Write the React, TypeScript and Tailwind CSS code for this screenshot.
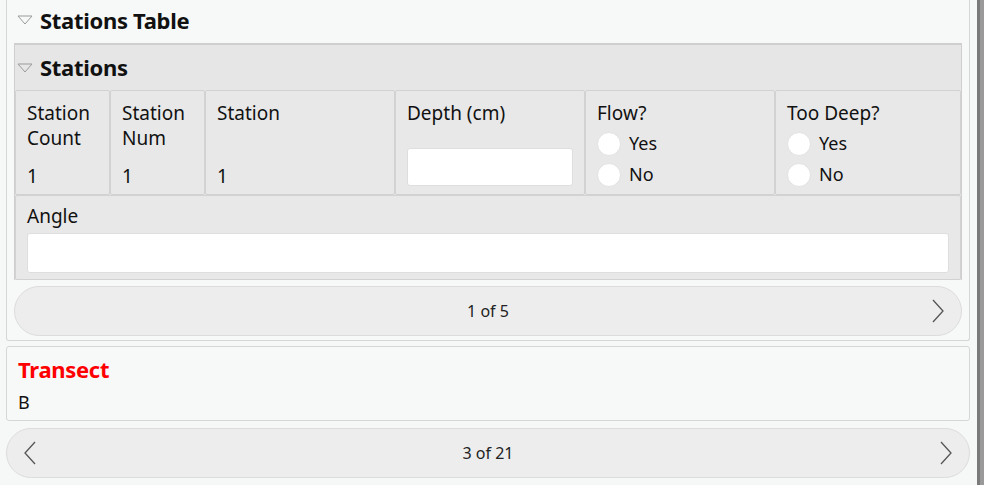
import React from 'react';

const font = { fontFamily: '"Noto Sans", "Open Sans", sans-serif' };

const Caret = () => (
    <svg width="16" height="10" viewBox="0 0 16 10" className="shrink-0">
        <path d="M1 1 L15 1 L8 9 Z" fill="none" stroke="#9a9a9a" strokeWidth="1" strokeLinejoin="round" />
    </svg>
);

const Chevron = ({ dir }: { dir: 'left' | 'right' }) => (
    <svg width="14" height="24" viewBox="0 0 14 24">
        {dir === 'right' ? (
            <path d="M2 1 L12 12 L2 23" fill="none" stroke="#555" strokeWidth="1.3" />
        ) : (
            <path d="M12 1 L2 12 L12 23" fill="none" stroke="#555" strokeWidth="1.3" />
        )}
    </svg>
);

const Radio = ({ label }: { label: string }) => (
    <div className="flex items-center gap-2 h-[31px]">
        <div className="w-6 h-6 rounded-full bg-white border border-[#e2e2e2]"></div>
        <span className="text-[18px]">{label}</span>
    </div>
);

const Pager = ({ text, prev }: { text: string; prev?: boolean }) => (
    <div className="h-[50px] rounded-full bg-[#ededed] border border-[#dcdcdc] flex items-center justify-between px-4">
        <div className="w-[14px]">{prev && <Chevron dir="left" />}</div>
        <span className="text-[16px] text-[#222]">{text}</span>
        <Chevron dir="right" />
    </div>
);

const cells = [
    { w: 'w-[95px]', label: ['Station', 'Count'], value: '1' },
    { w: 'w-[95px]', label: ['Station', 'Num'], value: '1' },
    { w: 'w-[190px]', label: ['Station'], value: '1' },
];

export default function App() {
    return (
        <div style={font} className="h-[485px] w-[984px] overflow-hidden bg-[#f6f7f7] flex text-[#111]">
            <div className="w-[977px] pl-[6px] pr-[7px]">
                {/* Stations Table card */}
                <div className="border-x border-b border-[#d6d6d6] rounded-b-[3px] bg-[#f7f8f8] px-[7px] pb-[4px]">
                    <div className="h-[43px] flex items-center gap-[7px] pl-[3px] pb-[3px]">
                        <Caret />
                        <h1 className="text-[22px] font-bold tracking-[-0.3px]">Stations Table</h1>
                    </div>

                    <div className="border-t-2 border-x border-[#cfcfcf] bg-[#e6e6e6]">
                        <div className="h-[45px] flex items-center gap-[7px] pl-[2px]">
                            <Caret />
                            <h2 className="text-[22px] font-bold tracking-[-0.3px]">Stations</h2>
                        </div>

                        <div className="flex text-[19px] leading-[25px]">
                            {cells.map((c, i) => (
                                <div key={i} className={`${c.w} h-[105px] border border-[#d2d2d2] rounded-[2px] bg-[#e8e8e8] px-[11px] pt-[10px] flex flex-col`}>
                                    <div className="h-[63px]">
                                        {c.label.map((l) => (
                                            <div key={l}>{l}</div>
                                        ))}
                                    </div>
                                    <div>{c.value}</div>
                                </div>
                            ))}
                            <div className="w-[190px] h-[105px] border border-[#d2d2d2] rounded-[2px] bg-[#e8e8e8] px-[11px] pt-[10px]">
                                <div>Depth (cm)</div>
                                <div className="mt-[22px] h-[38px] bg-white rounded-[3px] border border-[#dedede]"></div>
                            </div>
                            <div className="w-[190px] h-[105px] border border-[#d2d2d2] rounded-[2px] bg-[#e8e8e8] px-[11px] pt-[10px]">
                                <div>Flow?</div>
                                <div className="mt-[2px]">
                                    <Radio label="Yes" />
                                    <Radio label="No" />
                                </div>
                            </div>
                            <div className="flex-1 h-[105px] border border-[#d2d2d2] rounded-[2px] bg-[#e8e8e8] px-[11px] pt-[10px]">
                                <div>Too Deep?</div>
                                <div className="mt-[2px]">
                                    <Radio label="Yes" />
                                    <Radio label="No" />
                                </div>
                            </div>
                        </div>

                        <div className="h-[85px] border border-[#d2d2d2] rounded-[2px] bg-[#e8e8e8] px-[11px] pt-[8px] text-[19px] leading-[25px]">
                            <div>Angle</div>
                            <div className="mt-[4px] h-[40px] bg-white rounded-[3px] border border-[#dedede]"></div>
                        </div>
                    </div>

                    <div className="mt-[6px]">
                        <Pager text="1 of 5" />
                    </div>
                </div>

                {/* Transect card */}
                <div className="mt-[5px] h-[75px] border border-[#d6d6d6] rounded-[3px] bg-[#f7f8f8] px-[11px] pt-[6px]">
                    <div className="text-[22px] font-bold text-[#ff0000] leading-[32px] tracking-[-0.3px]">Transect</div>
                    <div className="text-[18px] leading-[24px] mt-[5px]">B</div>
                </div>

                <div className="mt-[7px]">
                    <Pager text="3 of 21" prev />
                </div>
            </div>
            <div className="w-[7px] h-full bg-[#9a9a9a] border-l-[3px] border-[#7a7a7a]"></div>
        </div>
    );
}
